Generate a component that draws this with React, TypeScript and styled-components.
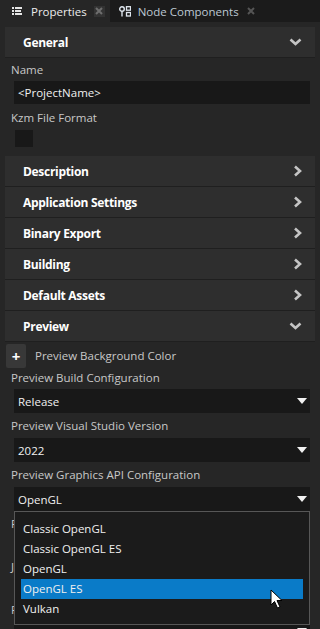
import React, { FC } from 'react';
import styled, { createGlobalStyle } from 'styled-components';

const GlobalStyle = createGlobalStyle`
  html, body {
    margin: 0;
    padding: 0;
    background: #262626;
  }
  body {
    font-family: 'Open Sans', 'Noto Sans', sans-serif;
  }
`;

const Frame = styled.div`
  position: relative;
  width: 320px;
  height: 629px;
  overflow: hidden;
  background: #262626;
  color: #c8c8c8;
  font-size: 11.5px;
`;

const TabBar = styled.div`
  display: flex;
  height: 22px;
  background: #1b1b1b;
`;

const Tab = styled.div<{ $active?: boolean }>`
  display: flex;
  align-items: center;
  height: 22px;
  padding: 0 5px 0 ${(p) => (p.$active ? 12 : 9)}px;
  background: ${(p) => (p.$active ? '#262626' : 'transparent')};
  color: ${(p) => (p.$active ? '#ececec' : '#bdc8d3')};
  font-size: 11.5px;
`;

const TabLabel = styled.span<{ $gap: number }>`
  margin-left: ${(p) => p.$gap}px;
  white-space: nowrap;
`;

const TabClose = styled.span<{ $boxed?: boolean; $gap: number }>`
  display: flex;
  align-items: center;
  justify-content: center;
  width: 11px;
  height: 11px;
  margin-left: ${(p) => p.$gap}px;
  background: ${(p) => (p.$boxed ? '#333333' : 'transparent')};
`;

const Panel = styled.div`
  display: flex;
  flex-direction: column;
  padding: 5px 5px 0;
`;

const Header = styled.div`
  display: flex;
  align-items: center;
  justify-content: space-between;
  height: 30px;
  padding: 0 13px 0 18px;
  background: #2e2e2e;
  border-bottom: 1px solid #1f1f1f;
  color: #ffffff;
  font-weight: 700;
  font-size: 12px;
  letter-spacing: -0.3px;
`;

const Body = styled.div<{ $pad?: string }>`
  display: flex;
  flex-direction: column;
  padding: ${(p) => p.$pad || '0'};
`;

const Label = styled.div<{ $top?: number }>`
  margin-top: ${(p) => (p.$top ?? 5)}px;
  padding-left: 6px;
  line-height: 16px;
  height: 16px;
  white-space: nowrap;
  color: #c8c8c8;
`;

const Field = styled.div<{ $top?: number; $h?: number }>`
  display: flex;
  align-items: center;
  justify-content: space-between;
  margin: ${(p) => (p.$top ?? 4)}px 5px 0 9px;
  height: ${(p) => p.$h ?? 24}px;
  padding: 0 3px 0 4px;
  background: #181818;
  color: #f0f0f0;
`;

const CheckBox = styled.div`
  width: 18px;
  height: 17px;
  margin: 4px 0 0 10px;
  background: #181818;
`;

const PlusRow = styled.div`
  display: flex;
  align-items: flex-start;
  height: 22px;
  margin-top: 2px;
`;

const PlusButton = styled.div`
  display: flex;
  align-items: center;
  justify-content: center;
  width: 20px;
  height: 24px;
  margin-left: 1px;
  background: #383838;
  border-radius: 2px;
  color: #ffffff;
  font-weight: 700;
  font-size: 15px;
`;

const PlusText = styled.span`
  margin-left: 9px;
  line-height: 24px;
  color: #c8c8c8;
`;

const DropWrap = styled.div`
  position: relative;
`;

const Popup = styled.div`
  position: absolute;
  top: 100%;
  left: 9px;
  right: 5px;
  z-index: 2;
  padding: 7px 6px 5px;
  background: #1b1b1b;
  border: 1px solid #575757;
`;

const Option = styled.div<{ $selected?: boolean }>`
  height: 20px;
  line-height: 20px;
  padding-left: 2px;
  background: ${(p) => (p.$selected ? '#0a7bc8' : 'transparent')};
  color: #f0f0f0;
`;

const Cursor = styled.svg`
  position: absolute;
  left: 270px;
  top: 589px;
  z-index: 3;
`;

const ChevronRight: FC = () => (
  <svg width="9" height="12" viewBox="0 0 9 12">
    <polyline points="2,1.5 7,6 2,10.5" fill="none" stroke="#c4c4c4" strokeWidth="2.6" />
  </svg>
);

const ChevronDown: FC = () => (
  <svg width="13" height="8" viewBox="0 0 13 8">
    <polyline points="1.5,1.5 6.5,6 11.5,1.5" fill="none" stroke="#c4c4c4" strokeWidth="2.6" />
  </svg>
);

const Caret: FC = () => (
  <svg width="10" height="6" viewBox="0 0 10 6">
    <polygon points="0,0 10,0 5,6" fill="#f0f0f0" />
  </svg>
);

const ListIcon: FC = () => (
  <svg width="10" height="8" viewBox="0 0 10 8">
    <rect x="0" y="0" width="2" height="2" fill="#e6e6e6" />
    <rect x="3" y="0" width="7" height="2" fill="#e6e6e6" />
    <rect x="0" y="3" width="2" height="2" fill="#e6e6e6" />
    <rect x="3" y="3" width="6" height="2" fill="#e6e6e6" />
    <rect x="0" y="6" width="2" height="2" fill="#e6e6e6" />
    <rect x="3" y="6" width="7" height="2" fill="#e6e6e6" />
  </svg>
);

const NodeIcon: FC = () => (
  <svg width="12" height="11" viewBox="0 0 12 11">
    <circle cx="3" cy="3" r="2.3" fill="none" stroke="#dfe6ee" strokeWidth="1.4" />
    <line x1="3" y1="5.3" x2="3" y2="10.5" stroke="#dfe6ee" strokeWidth="1.4" />
    <rect x="7.5" y="0.7" width="4" height="3.5" fill="none" stroke="#dfe6ee" strokeWidth="1.3" />
    <rect x="7.5" y="6.5" width="4" height="3.5" fill="none" stroke="#dfe6ee" strokeWidth="1.3" />
  </svg>
);

const CloseIcon: FC<{ color: string }> = ({ color }) => (
  <svg width="8" height="8" viewBox="0 0 8 8">
    <path d="M1 1 L7 7 M7 1 L1 7" stroke={color} strokeWidth="2" />
  </svg>
);

const collapsed = ['Description', 'Application Settings', 'Binary Export', 'Building', 'Default Assets'];

const apiOptions = ['Classic OpenGL', 'Classic OpenGL ES', 'OpenGL', 'OpenGL ES', 'Vulkan'];

const SelectField: FC<{ value?: string; top?: number; h?: number }> = ({ value, top, h }) => (
  <Field $top={top} $h={h}>
    <span>{value}</span>
    <Caret />
  </Field>
);

export default function App() {
  return (
    <>
      <GlobalStyle />
      <Frame>
        <TabBar>
          <Tab $active>
            <ListIcon />
            <TabLabel $gap={9}>Properties</TabLabel>
            <TabClose $boxed $gap={7}>
              <CloseIcon color="#6e6e6e" />
            </TabClose>
          </Tab>
          <Tab>
            <NodeIcon />
            <TabLabel $gap={7}>Node Components</TabLabel>
            <TabClose $gap={7}>
              <CloseIcon color="#555555" />
            </TabClose>
          </Tab>
        </TabBar>

        <Panel>
          <Header>
            <span>General</span>
            <ChevronDown />
          </Header>
          <Body $pad="0 0 9px">
            <Label $top={4}>Name</Label>
            <Field $top={3} $h={23}>
              <span>&lt;ProjectName&gt;</span>
            </Field>
            <Label $top={6}>Kzm File Format</Label>
            <CheckBox />
          </Body>

          {collapsed.map((title) => (
            <Header key={title}>
              <span>{title}</span>
              <ChevronRight />
            </Header>
          ))}

          <Header>
            <span>Preview</span>
            <ChevronDown />
          </Header>
          <Body>
            <PlusRow>
              <PlusButton>+</PlusButton>
              <PlusText>Preview Background Color</PlusText>
            </PlusRow>
            <Label $top={4}>Preview Build Configuration</Label>
            <SelectField value="Release" top={3} />
            <Label>Preview Visual Studio Version</Label>
            <SelectField value="2022" />
            <Label>Preview Graphics API Configuration</Label>
            <DropWrap>
              <SelectField value="OpenGL" />
              <Popup>
                {apiOptions.map((opt) => (
                  <Option key={opt} $selected={opt === 'OpenGL ES'}>
                    {opt}
                  </Option>
                ))}
              </Popup>
            </DropWrap>
            <Label>Preview Window Size</Label>
            <SelectField h={18} />
            <Label>JavaScript Support</Label>
            <SelectField h={18} />
            <Label>Preview Profiling</Label>
            <SelectField h={18} />
          </Body>
        </Panel>

        <Cursor width="14" height="21" viewBox="0 0 14 21">
          <path
            d="M1 1 L1 16 L4.5 12.5 L7.5 19 L10 18 L7 11.5 L12 11.5 Z"
            fill="#ffffff"
            stroke="#000000"
            strokeWidth="1"
            strokeLinejoin="round"
          />
        </Cursor>
      </Frame>
    </>
  );
}
